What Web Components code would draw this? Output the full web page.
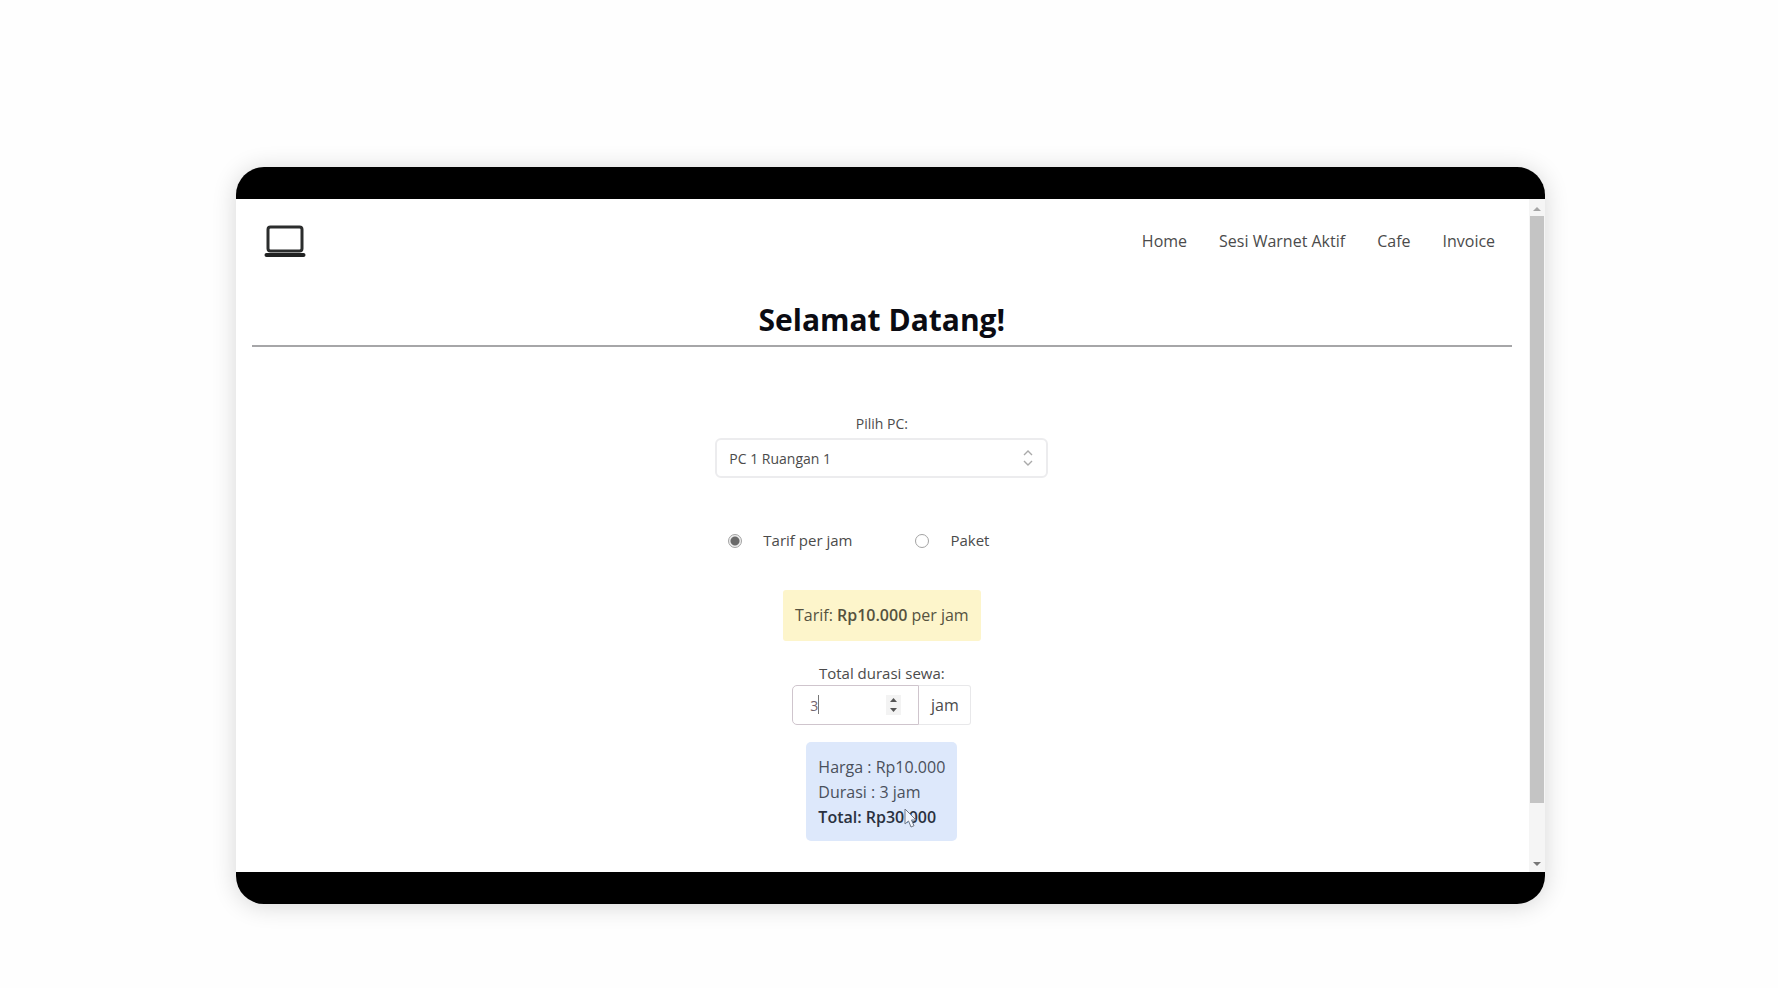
<!DOCTYPE html>
<html lang="id">
<head>
<meta charset="utf-8">
<meta name="viewport" content="width=device-width, initial-scale=1">
<title>Warnet</title>
<style>
  body { margin: 0; background: #fefefe; color: #4b4b4b; font: 16px/25px "Open Sans", "Noto Sans", sans-serif; }
  main { box-sizing: border-box; padding: 167px 13.1% 84px 13.25%; }
</style>
</head>
<body>
<main>
  <screen-frame>
    <site-header></site-header>
    <page-title>Selamat Datang!</page-title>
    <rent-form>
      <pc-picker></pc-picker>
      <rate-choice></rate-choice>
      <note-box>Tarif: <strong>Rp10.000</strong> per jam</note-box>
      <duration-field></duration-field>
      <price-summary></price-summary>
    </rent-form>
  </screen-frame>
</main>
<script>
  function define(name, html) {
    const template = document.createElement('template');
    template.innerHTML = html;
    customElements.define(name, class extends HTMLElement {
      constructor() {
        super();
        this.attachShadow({ mode: 'open' }).appendChild(template.content.cloneNode(true));
      }
    });
  }

  define('scroll-rail', `
    <style>
      :host { display: flex; flex-direction: column; align-items: center; width: 16px; box-sizing: border-box; padding: 8px 0 6px; background: #f5f5f5; }
      svg { display: block; flex: none; }
      .track { flex: 1; width: 14px; margin: 5px 0 4px; }
      .thumb { height: 91.5%; background: #c4c4c4; }
    </style>
    <svg width="8" height="4" viewBox="0 0 8 4"><path d="M0 4L4 0l4 4z" fill="#a5a5a5"/></svg>
    <div class="track"><div class="thumb"></div></div>
    <svg width="8" height="4" viewBox="0 0 8 4"><path d="M0 0h8L4 4z" fill="#777"/></svg>`);

  define('screen-frame', `
    <style>
      :host { display: block; border-radius: 28px; overflow: hidden; background: #fff; box-shadow: 0 2px 24px rgba(0,0,0,.16); }
      .bar { height: 32px; background: #000; }
      .view { display: flex; }
      .page { flex: 1; min-width: 0; padding: 0 17px 31px 16px; }
    </style>
    <div class="bar"></div>
    <div class="view"><div class="page"><slot></slot></div><scroll-rail></scroll-rail></div>
    <div class="bar"></div>`);

  define('site-header', `
    <style>
      :host { display: flex; justify-content: space-between; align-items: center; height: 84px; padding: 0 17px 0 12px; }
      svg { display: block; }
      nav { display: flex; gap: 32px; font-size: 16px; }
      a { color: inherit; text-decoration: none; }
    </style>
    <a href="#" aria-label="Beranda"><svg width="42" height="34" viewBox="0 0 42 34">
      <rect x="4" y="3" width="34" height="24" rx="2.500" fill="#fff" stroke="#2b2d2d" stroke-width="3"/>
      <rect x="0.500" y="29" width="41" height="4" rx="2" fill="#202222"/>
    </svg></a>
    <nav><a href="#">Home</a><a href="#">Sesi Warnet Aktif</a><a href="#">Cafe</a><a href="#">Invoice</a></nav>`);

  define('page-title', `
    <style>
      :host { display: block; border-bottom: 2px solid #a6a6a8; padding: 17px 0 5px; text-align: center; }
      h1 { margin: 0; font-size: 30px; line-height: 40px; font-weight: 700; color: #0b0b12; }
    </style>
    <h1><slot></slot></h1>`);

  define('rent-form', `
    <style>:host { display: flex; flex-direction: column; align-items: center; padding-top: 65px; }</style>
    <slot></slot>`);

  define('pc-picker', `
    <style>
      :host { display: block; width: 333px; text-align: center; }
      label { display: block; font-size: 14px; line-height: 24px; margin-bottom: 2px; }
      .box { position: relative; }
      select { appearance: none; display: block; width: 100%; height: 40px; box-sizing: border-box; padding: 0 40px 0 12px; margin: 0; border: 2px solid #ececee; border-radius: 6px; background: #fff; color: inherit; font: inherit; font-size: 14px; }
      svg { position: absolute; right: 15px; top: 12px; pointer-events: none; }
    </style>
    <label for="pc">Pilih PC:</label>
    <div class="box">
      <select id="pc"><option>PC 1 Ruangan 1</option></select>
      <svg width="10" height="16" viewBox="0 0 10 16" fill="none" stroke="#aaa" stroke-width="1.400"><path d="M1 5l4-4 4 4M1 11l4 4 4-4"/></svg>
    </div>`);

  define('rate-choice', `
    <style>
      :host { display: flex; gap: 63px; margin: 50px 0 37px; width: 307px; }
      label { display: flex; align-items: center; gap: 21px; font-size: 15px; white-space: nowrap; }
      input { appearance: none; width: 14px; height: 14px; margin: 0; border: 1px solid #a3a3a3; border-radius: 50%; box-sizing: border-box; background: #fff; }
      input:checked { background: radial-gradient(circle, #6a6a6a 0 4px, #eee 5px); }
    </style>
    <label><input type="radio" name="rate" checked>Tarif per jam</label>
    <label><input type="radio" name="rate">Paket</label>`);

  define('note-box', `
    <style>
      :host { display: block; padding: 13px 12px; background: #fdf5cb; border-radius: 3px; color: #55523f; }
      ::slotted(strong) { font-weight: 600; }
    </style>
    <slot></slot>`);

  define('duration-field', `
    <style>
      :host { display: block; margin: 20px 0 17px; text-align: center; }
      label { display: block; font-size: 15px; line-height: 24px; }
      .row { display: flex; justify-content: center; }
      .field { position: relative; width: 127px; }
      input { appearance: textfield; display: block; width: 100%; height: 40px; box-sizing: border-box; margin: 0; padding: 0 36px 0 17px; border: 1px solid #cfc5cd; border-radius: 5px 0 0 5px; background: #fff; color: #73656d; font: inherit; font-size: 14px; outline: none; }
      input::-webkit-inner-spin-button { appearance: none; margin: 0; }
      .caret { position: absolute; left: 26px; top: 10px; width: 1px; height: 19px; background: #777; }
      .spin { position: absolute; right: 18px; top: 10px; }
      .unit { box-sizing: border-box; width: 52px; height: 40px; line-height: 38px; border: 1px solid #e8e8ea; border-left: 0; border-radius: 0 3px 3px 0; background: #fff; }
    </style>
    <label for="hours">Total durasi sewa:</label>
    <div class="row">
      <div class="field">
        <input id="hours" type="number" value="3">
        <span class="caret"></span>
        <svg class="spin" width="15" height="20" viewBox="0 0 15 20"><rect width="15" height="20" fill="#f3f3f3"/><path d="M4 7l3.500-4L11 7zM4 13h7l-3.500 4z" fill="#555"/></svg>
      </div>
      <div class="unit">jam</div>
    </div>`);

  define('price-summary', `
    <style>
      :host { display: block; position: relative; padding: 13px 12px 11px; border-radius: 5px; background: #dde8fb; color: #4a505c; }
      strong { font-weight: 600; color: #2a3140; }
      svg { position: absolute; left: 98px; top: 66px; }
    </style>
    <div>Harga : Rp10.000</div>
    <div>Durasi : 3 jam</div>
    <strong>Total: Rp30.000</strong>
    <svg width="13" height="21" viewBox="0 0 13 21"><path d="M1 1v15l3.500-3 2.500 6 3-1.300-2.500-5.700H12z" fill="#f1f5fd" stroke="#707887" stroke-width="1"/></svg>`);
</script>
</body>
</html>
